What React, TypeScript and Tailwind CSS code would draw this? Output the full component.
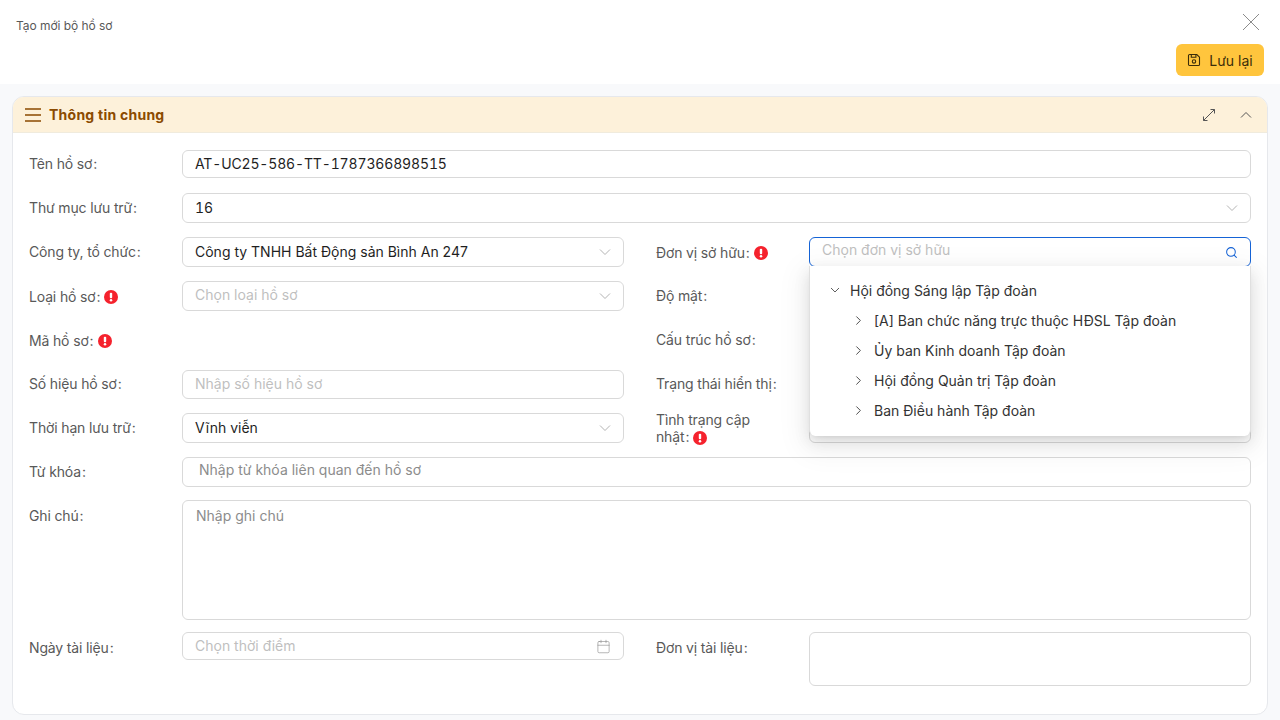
import type { ReactNode } from "react";
import { Calendar, ChevronRight, Search } from "lucide-react";

function Required() {
  return (
    <svg width="14" height="14" viewBox="0 0 14 14" className="ml-[4px] mt-[2px] shrink-0">
      <circle cx="7" cy="7" r="7" fill="#f5222d" />
      <rect x="5.8" y="2.8" width="2.4" height="5.4" rx="1" fill="#fff" />
      <circle cx="7" cy="10.2" r="1.25" fill="#fff" />
    </svg>
  );
}

function SaveIcon() {
  return (
    <svg width="14" height="14" viewBox="0 0 14 14" fill="none" stroke="#3b2d0a" strokeWidth="1.1" className="shrink-0">
      <path d="M2.6 1.5h7.2l2.7 2.7v7.2a1.1 1.1 0 0 1-1.1 1.1H2.6a1.1 1.1 0 0 1-1.1-1.1V2.6a1.1 1.1 0 0 1 1.1-1.1Z" />
      <path d="M4.3 1.7v2.6h4.6V1.7" />
      <circle cx="7" cy="8.4" r="1.7" />
    </svg>
  );
}

function ExpandIcon() {
  return (
    <svg width="14" height="14" viewBox="0 0 14 14" fill="none" stroke="#555555" strokeWidth="1" className="shrink-0">
      <path d="M1.5 12.5 12.5 1.5M8.5 1.5h4v4M1.5 8.5v4h4" />
    </svg>
  );
}

function Chevron({ up, className = "text-[#b3b3b3]" }: { up?: boolean; className?: string }) {
  return (
    <svg width="12" height="8" viewBox="0 0 12 8" fill="none" stroke="currentColor" strokeWidth="1" className={`shrink-0 ${up ? "rotate-180" : ""} ${className}`}>
      <path d="M1 1.5 6 6.5 11 1.5" />
    </svg>
  );
}

// label text sits 1px above the row centre unless it carries the required mark
function Label({ children, required }: { children: string; required?: boolean }) {
  return (
    <div className="flex w-[153px] shrink-0 items-center text-[14px] tracking-[-0.15px] text-[#595959]">
      <span className={required ? "" : "-mt-[2px]"}>
        {children}
        <span className="ml-[1px]">:</span>
      </span>
      {required && <Required />}
    </div>
  );
}

function Field({
  text,
  placeholder,
  icon,
  height = "h-[30px]",
  focused,
  lift = "-mt-[2px]",
  numeric,
}: {
  text?: string;
  placeholder?: string;
  icon?: ReactNode;
  height?: string;
  focused?: boolean;
  lift?: string;
  numeric?: boolean;
}) {
  return (
    <div
      className={`relative flex ${height} min-w-0 flex-1 items-center justify-between rounded-[6px] border bg-white pl-3 pr-3 text-[14px] ${
        focused ? "border-[#1563d6]" : "border-[#d9d9d9]"
      }`}
    >
      {text && <span className={`${lift} text-[#1f1f1f] ${numeric ? "tabular-nums tracking-[-0.15px]" : ""}`}>{text}</span>}
      {placeholder && <span className={`${lift} text-[#bfbfbf]`}>{placeholder}</span>}
      {icon}
    </div>
  );
}

const chevron = <Chevron />;

function TreeNode({ label, child, open }: { label: string; child?: boolean; open?: boolean }) {
  return (
    <div className={`flex h-[30px] items-center text-[14px] text-[#333333] ${child ? "pl-[41px]" : "pl-[19px]"}`}>
      {open ? (
        <Chevron className="mr-[9px] scale-[0.8] text-[#333333]" />
      ) : (
        <ChevronRight size={15} strokeWidth={1.4} className="mr-[8px] shrink-0 text-[#333333]" />
      )}
      <span>{label}</span>
    </div>
  );
}

function OwnerDropdown() {
  return (
    <div className="absolute left-0 right-0 top-[29px] z-10 rounded-b-[6px] border-x border-[#e0e0e0] bg-white pb-[11px] pt-[9px] shadow-[0_6px_16px_0_rgba(0,0,0,0.1),0_3px_6px_-4px_rgba(0,0,0,0.14),0_9px_28px_8px_rgba(0,0,0,0.05)]">
      <TreeNode label="Hội đồng Sáng lập Tập đoàn" open />
      <TreeNode label="[A] Ban chức năng trực thuộc HĐSL Tập đoàn" child />
      <TreeNode label="Ủy ban Kinh doanh Tập đoàn" child />
      <TreeNode label="Hội đồng Quản trị Tập đoàn" child />
      <TreeNode label="Ban Điều hành Tập đoàn" child />
    </div>
  );
}

export default function App() {
  return (
    <div className="flex h-[720px] flex-col overflow-hidden bg-[#f8f9fb] font-['Inter',sans-serif]">
      <div className="flex h-[84px] shrink-0 flex-col bg-white pl-4 pr-4">
        <div className="flex items-start justify-between">
          <h1 className="mt-[17px] text-[12px] leading-[18px] tracking-[-0.05px] text-[#595959]">Tạo mới bộ hồ sơ</h1>
          <svg width="18" height="18" viewBox="0 0 18 18" fill="none" stroke="#8c8c8c" strokeWidth="1" className="mr-[4px] mt-[13px]">
            <path d="M1 1 17 17M17 1 1 17" />
          </svg>
        </div>
        <div className="mt-[9px] flex justify-end">
          <button className="flex h-8 w-[88px] items-center justify-center gap-2 rounded-[6px] bg-[#ffc53d] text-[14px] text-[#3b2d0a]">
            <SaveIcon />
            Lưu lại
          </button>
        </div>
      </div>

      <div className="mx-3 mt-3 h-[619px] overflow-hidden rounded-[12px] border border-[#e6e8ec] bg-white">
        <div className="flex h-9 items-center justify-between border-b border-[#f0ebdd] bg-[#fdf1da] pl-3 pr-[15px]">
          <div className="flex items-center gap-[8px]">
            <svg width="16" height="14" viewBox="0 0 16 14" fill="none" stroke="#8b4a00" strokeWidth="1.3">
              <path d="M0 1h16M0 7h16M0 13h16" />
            </svg>
            <span className="text-[14px] font-bold tracking-[0.25px] text-[#8b4a00]">Thông tin chung</span>
          </div>
          <div className="flex items-center gap-[24px]">
            <ExpandIcon />
            <Chevron up className="text-[#555555]" />
          </div>
        </div>

        <div className="flex flex-col px-4 pt-[17px]">
          <div className="mb-[15px] flex h-[28px]">
            <Label>Tên hồ sơ</Label>
            <Field text="AT-UC25-586-TT-1787366898515" height="h-[28px]" numeric />
          </div>
          <div className="mb-[14px] flex h-[30px]">
            <Label>Thư mục lưu trữ</Label>
            <Field text="16" icon={chevron} numeric />
          </div>

          <div className="mb-[14px] flex h-[30px] gap-8">
            <div className="flex flex-1">
              <Label>Công ty, tổ chức</Label>
              <Field text="Công ty TNHH Bất Động sản Bình An 247" icon={chevron} />
            </div>
            <div className="relative flex flex-1">
              <Label required>Đơn vị sở hữu</Label>
              <div className="relative flex min-w-0 flex-1">
                <Field
                  placeholder="Chọn đơn vị sở hữu"
                  focused
                  lift="-mt-[6px]"
                  icon={<Search size={13} strokeWidth={1.9} className="shrink-0 text-[#1563d6]" />}
                />
                <OwnerDropdown />
              </div>
            </div>
          </div>

          <div className="mb-[14px] flex h-[30px] gap-8">
            <div className="flex flex-1">
              <Label required>Loại hồ sơ</Label>
              <Field placeholder="Chọn loại hồ sơ" icon={chevron} lift="-mt-[4px]" />
            </div>
            <div className="flex flex-1">
              <Label>Độ mật</Label>
              <Field icon={chevron} />
            </div>
          </div>

          <div className="mb-[15px] flex h-[30px] gap-8">
            <div className="flex flex-1">
              <Label required>Mã hồ sơ</Label>
            </div>
            <div className="flex flex-1">
              <Label>Cấu trúc hồ sơ</Label>
              <Field icon={chevron} />
            </div>
          </div>

          <div className="mb-[14px] flex h-[29px] gap-8">
            <div className="flex flex-1">
              <Label>Số hiệu hồ sơ</Label>
              <Field placeholder="Nhập số hiệu hồ sơ" height="h-[29px]" />
            </div>
            <div className="flex flex-1">
              <Label>Trạng thái hiển thị</Label>
              <Field icon={chevron} height="h-[29px]" />
            </div>
          </div>

          <div className="mb-[14px] flex h-[30px] gap-8">
            <div className="flex flex-1">
              <Label>Thời hạn lưu trữ</Label>
              <Field text="Vĩnh viễn" icon={chevron} />
            </div>
            <div className="flex flex-1">
              <div className="-mt-[2px] w-[153px] shrink-0 text-[14px] leading-[17px] tracking-[-0.15px] text-[#595959]">
                <div className="w-[100px]">
                  Tình trạng cập
                  <span className="flex items-center">
                    nhật<span className="ml-[1px]">:</span>
                    <Required />
                  </span>
                </div>
              </div>
              <Field icon={chevron} />
            </div>
          </div>

          <div className="mb-[13px] flex h-[30px]">
            <Label>Từ khóa</Label>
            <div className="flex h-[30px] flex-1 items-center rounded-[6px] border border-[#d9d9d9] pl-4 text-[14px] text-[#8c8c8c]">
              <span className="-mt-[5px]">Nhập từ khóa liên quan đến hồ sơ</span>
            </div>
          </div>

          <div className="mb-[12px] flex h-[120px]">
            <div className="flex h-[32px] items-center">
              <Label>Ghi chú</Label>
            </div>
            <div className="h-[120px] flex-1 rounded-[6px] border border-[#d9d9d9] px-[13px] pt-[4px] text-[14px] text-[#8c8c8c]">
              Nhập ghi chú
            </div>
          </div>

          <div className="flex h-[54px] gap-8">
            <div className="flex flex-1 items-start">
              <div className="flex h-[32px] items-center">
                <Label>Ngày tài liệu</Label>
              </div>
              <Field
                placeholder="Chọn thời điểm"
                height="h-[28px]"
                icon={<Calendar size={15} strokeWidth={1} className="shrink-0 text-[#8c8c8c]" />}
              />
            </div>
            <div className="flex flex-1 items-start">
              <div className="flex h-[32px] items-center">
                <Label>Đơn vị tài liệu</Label>
              </div>
              <Field height="h-[54px]" />
            </div>
          </div>
        </div>
      </div>
    </div>
  );
}
